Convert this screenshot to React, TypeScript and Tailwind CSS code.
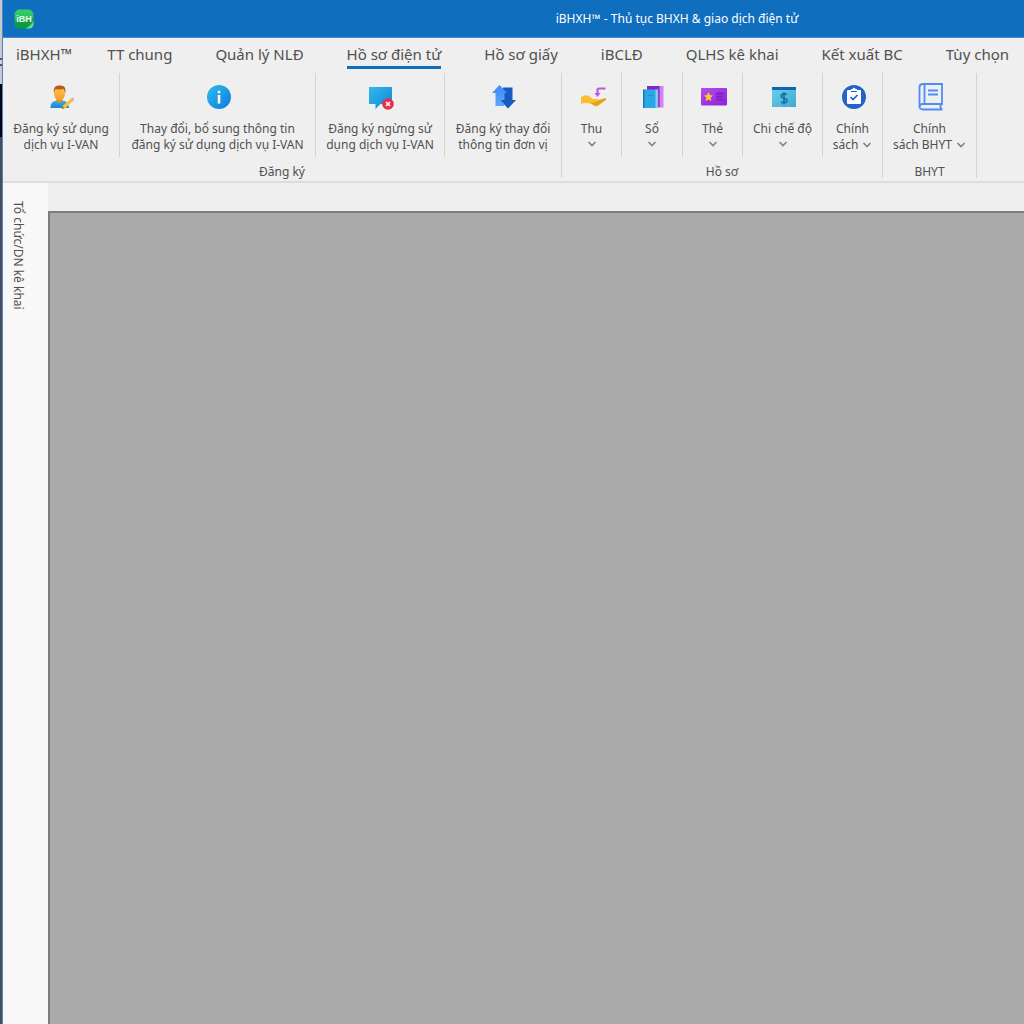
import type { ReactNode } from "react";
import { clsx } from "clsx";

const tabs = [
  "TT chung",
  "Quản lý NLĐ",
  "Hồ sơ điện tử",
  "Hồ sơ giấy",
  "iBCLĐ",
  "QLHS kê khai",
  "Kết xuất BC",
  "Tùy chọn",
];

type Item = {
  lines: string[];
  icon: ReactNode;
  width: string;
  menu?: "below" | "inline";
};

type Group = {
  label: string;
  items: Item[];
};

function AppLogo() {
  return (
    <svg viewBox="0 0 20 20" className="h-5 w-5" aria-hidden="true">
      <defs>
        <linearGradient id="logo" x1="0" y1="0" x2="0" y2="1">
          <stop offset="0" stopColor="#35d16b" />
          <stop offset="1" stopColor="#1aa64d" />
        </linearGradient>
      </defs>
      <rect x="0.5" y="0.5" width="19" height="19" rx="5" fill="url(#logo)" />
      <path d="M0.7 12Q10 15 19.3 9Q19 14 12 19.5H5Q1 19 0.7 15Z" fill="#0c9140" opacity="0.7" />
      <path d="M11.500 19.3Q18 17 19.5 12V15Q19 19.5 15 19.5Z" fill="#63e391" />
      <text x="10" y="13" textAnchor="middle" fontFamily="Liberation Sans, sans-serif" fontSize="9" fontWeight="700" fill="#e3faea">
        iBH
      </text>
    </svg>
  );
}

function UserEditIcon() {
  return (
    <svg viewBox="0 0 26 26" className="h-[26px] w-[26px]" aria-hidden="true">
      <defs>
        <linearGradient id="face" x1="0" y1="0" x2="0" y2="1">
          <stop offset="0" stopColor="#ffc95c" />
          <stop offset="1" stopColor="#f49b20" />
        </linearGradient>
        <linearGradient id="body" x1="0" y1="0" x2="0" y2="1">
          <stop offset="0" stopColor="#34b4f0" />
          <stop offset="1" stopColor="#1585d4" />
        </linearGradient>
      </defs>
      <path d="M1.500 24Q1 17 8 16.500H14Q19.500 17 20 24Z" fill="url(#body)" />
      <path d="M7.500 13H13.500V17Q10.500 21 7.500 17Z" fill="#e78b18" />
      <ellipse cx="10.500" cy="9.500" rx="5.500" ry="7" fill="url(#face)" />
      <path d="M5 9Q3.500 1.500 10 1.500Q18 0.500 16.200 9.500Q15.700 7 14.700 5Q10 6 6.500 5Q5.500 7 5 9Z" fill="#b95a1a" />
      <path d="M13 25L14 21.500L21.500 15L24 17L16.500 24Z" fill="#f6c42d" />
      <path d="M13 25L13.700 22.500L15.300 24.300Z" fill="#8d6231" />
      <path d="M21.500 15L23 13.800Q24.200 13.500 25 14.800L24.800 16.200L23.800 17.200Z" fill="#e8a0b0" />
    </svg>
  );
}

function InfoIcon() {
  return (
    <svg viewBox="0 0 26 26" className="h-[26px] w-[26px]" aria-hidden="true">
      <defs>
        <linearGradient id="info" x1="0" y1="0" x2="1" y2="1">
          <stop offset="0" stopColor="#31bdf0" />
          <stop offset="1" stopColor="#087ad8" />
        </linearGradient>
      </defs>
      <circle cx="13" cy="13" r="12" fill="url(#info)" />
      <circle cx="13" cy="8" r="1.500" fill="#fff" />
      <path d="M13 11V19.500" stroke="#fff" strokeWidth="2.600" />
    </svg>
  );
}

function ChatRemoveIcon() {
  return (
    <svg viewBox="0 0 26 26" className="h-[26px] w-[26px]" aria-hidden="true">
      <defs>
        <linearGradient id="chat" x1="0" y1="0" x2="1" y2="1">
          <stop offset="0" stopColor="#32b8ee" />
          <stop offset="1" stopColor="#1286d5" />
        </linearGradient>
      </defs>
      <path d="M1 3H24V20H12.500L7.500 25V20H1Z" fill="url(#chat)" />
      <circle cx="20" cy="20" r="5.800" fill="#e82e48" />
      <path d="M18 18L22 22M22 18L18 22" stroke="#fff" strokeWidth="1.500" />
    </svg>
  );
}

function SwapIcon() {
  return (
    <svg viewBox="0 0 26 26" className="h-[26px] w-[26px]" aria-hidden="true">
      <defs>
        <linearGradient id="up" x1="0" y1="0" x2="0" y2="1">
          <stop offset="0" stopColor="#3d8bfa" />
          <stop offset="1" stopColor="#5aa8ff" />
        </linearGradient>
      </defs>
      <path d="M12 3.500H21.500V16H25L17 24.500L9 16H12Z" fill="#185abd" />
      <path d="M8.500 1L16 9H13.500V16H9L13 20V22H4.500V9H1Z" fill="url(#up)" />
    </svg>
  );
}

function HandIcon() {
  return (
    <svg viewBox="0 0 28 26" className="h-[26px] w-7" aria-hidden="true">
      <path d="M2 13Q7 10 10 12L14 15L19 15Q20.500 16 18 17L27 14V16L19 22Q16 23.500 12 20Q7 18 2 20Z" fill="#fbbd33" />
      <path d="M14 18.500Q18 18 20 16L26.500 14V16L18.500 21.500Q15 22 12 19Z" fill="#e6a21d" />
      <path d="M26.500 4.500H20Q18.500 4.500 18.500 6V10" fill="none" stroke="#b45be0" strokeWidth="2.200" />
      <path d="M15.500 9H21.500L18.500 13Z" fill="#b45be0" />
    </svg>
  );
}

function BooksIcon() {
  return (
    <svg viewBox="0 0 24 26" className="h-[26px] w-6" aria-hidden="true">
      <path d="M6 2H19V23H6Z" fill="#8a22d0" />
      <path d="M19 2H22.500V23.500H19Z" fill="#cf86ef" />
      <path d="M17.500 2.500H19V23.500H17.500Z" fill="#b040e5" />
      <path d="M2 5.500H17V24H2Z" fill="#28a9e5" />
      <path d="M2 5.500H3.500V24H2Z" fill="#147dba" />
      <path d="M14.500 5.500H17V24H14.500Z" fill="#82cce9" />
      <path d="M7 11.500H12" stroke="#1593d1" />
    </svg>
  );
}

function CardIcon() {
  return (
    <svg viewBox="0 0 28 26" className="h-[26px] w-7" aria-hidden="true">
      <defs>
        <linearGradient id="card" x1="0" y1="0" x2="1" y2="1">
          <stop offset="0" stopColor="#b44cec" />
          <stop offset="1" stopColor="#8c23d9" />
        </linearGradient>
      </defs>
      <rect x="1" y="4" width="26" height="17.500" rx="1" fill="url(#card)" />
      <path d="M8.500 8L10 11L13 11.500L10.700 13.700L11.300 17L8.500 15.400L5.700 17L6.300 13.700L4 11.500L7 11Z" fill="#ffc629" />
      <path d="M16 9.500H24M16 12.500H23M16 15.500H24" stroke="#7f22c4" strokeWidth="2.200" />
    </svg>
  );
}

function MoneyIcon() {
  return (
    <svg viewBox="0 0 26 26" className="h-[26px] w-[26px]" aria-hidden="true">
      <defs>
        <linearGradient id="money" x1="0" y1="0" x2="1" y2="1">
          <stop offset="0" stopColor="#6bd1ec" />
          <stop offset="1" stopColor="#40a9ce" />
        </linearGradient>
      </defs>
      <path d="M1 3H25V23H1Z" fill="url(#money)" />
      <path d="M1 3H25V6H1Z" fill="#0d66b5" />
      <path d="M16 10.500Q12.500 9 10.500 11Q9.500 13.500 13 14Q17 15 15.500 18Q13 19.500 10 18M13 8V20.500" fill="none" stroke="#1474ad" strokeWidth="1.800" />
    </svg>
  );
}

function ClipboardIcon() {
  return (
    <svg viewBox="0 0 26 26" className="h-[26px] w-[26px]" aria-hidden="true">
      <circle cx="13" cy="13" r="12" fill="#2364c9" />
      <path d="M7 6H10V5H11.500Q13 2.500 14.500 5H16V6H19Q20 6 20 7V19Q20 20 19 20H7Q6 20 6 19V7Q6 6 7 6Z" fill="#fff" />
      <path d="M10 7.500H16" stroke="#2364c9" />
      <path d="M9.500 13L12 15.500L16.500 11" fill="none" stroke="#2364c9" strokeWidth="1.700" />
    </svg>
  );
}

function BookIcon() {
  return (
    <svg viewBox="0 0 26 28" className="h-7 w-[26px]" fill="none" stroke="#528bf8" strokeWidth="1.800" aria-hidden="true">
      <path d="M24 21H5Q1.500 21 1.500 24V4Q1.500 1 5 1H24Z" />
      <path d="M1.500 23Q1.500 26.500 5 26.500H24.500M23 21Q21.500 24 23.500 26M6.500 1V21" />
      <path d="M10 7.500H20M10 11.500H20" />
    </svg>
  );
}

function Chevron() {
  return (
    <svg viewBox="0 0 10 6" className="h-1.5 w-2.5" aria-hidden="true">
      <path d="M1.500 1L5 4.500L8.500 1" fill="none" stroke="#858585" strokeWidth="1.700" />
    </svg>
  );
}

const groups: Group[] = [
  {
    label: "Đăng ký",
    items: [
      { lines: ["Đăng ký sử dụng", "dịch vụ I-VAN"], icon: <UserEditIcon />, width: "w-[117px]" },
      { lines: ["Thay đổi, bổ sung thông tin", "đăng ký sử dụng dịch vụ I-VAN"], icon: <InfoIcon />, width: "w-[196px]" },
      { lines: ["Đăng ký ngừng sử", "dụng dịch vụ I-VAN"], icon: <ChatRemoveIcon />, width: "w-[129px]" },
      { lines: ["Đăng ký thay đổi", "thông tin đơn vị"], icon: <SwapIcon />, width: "w-[117px]" },
    ],
  },
  {
    label: "Hồ sơ",
    items: [
      { lines: ["Thu"], icon: <HandIcon />, width: "w-[60px]", menu: "below" },
      { lines: ["Sổ"], icon: <BooksIcon />, width: "w-[61px]", menu: "below" },
      { lines: ["Thẻ"], icon: <CardIcon />, width: "w-[60px]", menu: "below" },
      { lines: ["Chi chế độ"], icon: <MoneyIcon />, width: "w-[80px]", menu: "below" },
      { lines: ["Chính", "sách"], icon: <ClipboardIcon />, width: "w-[60px]", menu: "inline" },
    ],
  },
  {
    label: "BHYT",
    items: [{ lines: ["Chính", "sách BHYT"], icon: <BookIcon />, width: "w-[94px]", menu: "inline" }],
  },
];

function RibbonButton({ item, last }: { item: Item; last: boolean }) {
  return (
    <button
      type="button"
      className={clsx(
        "flex h-[84px] shrink-0 flex-col items-center border-r whitespace-nowrap",
        last ? "border-transparent" : "border-[#d4d4d4]",
        item.width
      )}
    >
      <span className="flex h-12 items-center pl-0.5">{item.icon}</span>
      {item.lines.map((line, i) => (
        <span key={line} className="flex items-center gap-1">
          {line}
          {item.menu === "inline" && i === item.lines.length - 1 && <Chevron />}
        </span>
      ))}
      {item.menu === "below" && (
        <span className="flex h-4 items-center pb-0.5">
          <Chevron />
        </span>
      )}
    </button>
  );
}

function Ribbon() {
  return (
    <div className="flex h-[110px] overflow-hidden border-b-2 border-[#dddddd] text-xs leading-4">
      {groups.map((group) => (
        <section key={group.label} className="h-[105px] shrink-0 border-r border-[#d4d4d4]">
          <div className="-mr-px flex">
            {group.items.map((item, i) => (
              <RibbonButton key={item.lines.join(" ")} item={item} last={i === group.items.length - 1} />
            ))}
          </div>
          <h2 className="pt-[7px] text-center">{group.label}</h2>
        </section>
      ))}
    </div>
  );
}

export default function App() {
  return (
    <div className="flex min-h-screen bg-[#efefef] font-['Noto_Sans','Open_Sans',sans-serif] text-[#505050]">
      <div className="flex w-0.5 shrink-0 flex-col bg-[#4c4c55]">
        <div className="h-[58px] bg-[#c9c9c9]" />
        <div className="h-2 border-y-2 border-[#555555] bg-[#d6d6d6]" />
        <div className="h-[18px] bg-[#c9c9c9]" />
        <div className="h-[53px] bg-[#02040f]" />
      </div>

      <div className="flex min-w-0 flex-1 flex-col border-l border-[#4a86d4]">
        <header className="flex h-[38px] items-center border-b border-[#4a86d4] bg-[#106ebe] pl-[11px] text-white">
          <AppLogo />
          <h1 className="flex-1 pl-74 text-center text-xs">iBHXH™ - Thủ tục BHXH & giao dịch điện tử</h1>
        </header>

        <nav className="flex h-[35px] items-center gap-[43px] overflow-hidden pl-[13px] text-[15px] leading-6 whitespace-nowrap">
          <a href="#" className="-mr-2 border-b-[3px] border-transparent">
            iBHXH™
          </a>
          {tabs.map((tab) => (
            <a
              key={tab}
              href="#"
              className={clsx("border-b-[3px]", tab === "Hồ sơ điện tử" ? "border-[#106ebe]" : "border-transparent")}
            >
              {tab}
            </a>
          ))}
        </nav>

        <Ribbon />

        <div className="flex flex-1">
          <aside className="w-[45px] shrink-0 bg-[#f8f8f8] pt-[18px]">
            <button type="button" className="pl-[7px] text-xs leading-4 [writing-mode:vertical-rl]">
              Tổ chức/DN kê khai
            </button>
          </aside>
          <main className="flex flex-1 flex-col pt-7">
            <div className="flex-1 border-t-2 border-l-2 border-[#7d7d7d] bg-[#ababab]" />
          </main>
        </div>
      </div>
    </div>
  );
}
